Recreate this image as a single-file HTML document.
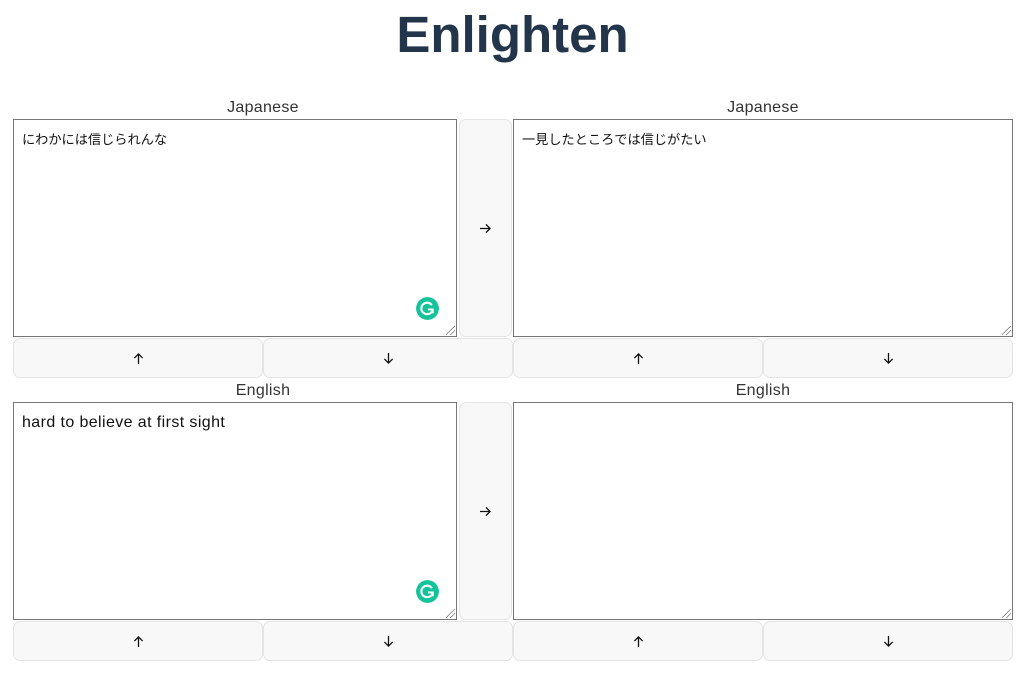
<!DOCTYPE html>
<html><head><meta charset="utf-8"><style>
*{box-sizing:border-box;margin:0;padding:0}
body{width:1033px;height:675px;background:#fff;position:relative;font-family:"Liberation Sans","Noto Sans CJK JP",sans-serif;overflow:hidden}
h1{position:absolute;left:0;width:1025px;top:3px;text-align:center;font-size:51px;font-weight:bold;color:#22354a;line-height:64px}
.lbl{position:absolute;width:500px;text-align:center;font-size:16px;color:#333;line-height:18px;letter-spacing:0.3px}
.ta{position:absolute;border:1px solid #767676;background:#fff;font-size:15px;color:#111;padding:10px 8px;line-height:20px}
.jp{font-size:13.2px}
.en{font-size:16px;letter-spacing:0.4px}
.ta .rs{position:absolute;right:1px;bottom:1px;width:9px;height:9px;background:linear-gradient(135deg,transparent 45%,#777 45%,#777 52%,transparent 52%,transparent 70%,#777 70%,#777 77%,transparent 77%)}
.btn{position:absolute;background:#f8f8f8;border:1px solid #e4e4e4;border-radius:7px;display:flex;align-items:center;justify-content:center}
.g{position:absolute;width:23px;height:23px;border-radius:50%}
</style></head><body>
<h1>Enlighten</h1>
<svg width="0" height="0" style="position:absolute"><defs>
<symbol id="up" viewBox="0 0 12 14"><path d="M6 13V2M1.5 6.5L6 2l4.5 4.5" fill="none" stroke="#111" stroke-width="1.4"/></symbol>
<symbol id="dn" viewBox="0 0 12 14"><path d="M6 1v11M1.5 7.5L6 12l4.5-4.5" fill="none" stroke="#111" stroke-width="1.4"/></symbol>
<symbol id="rt" viewBox="0 0 14 12"><path d="M1 6h11M7.5 1.5L12 6l-4.5 4.5" fill="none" stroke="#111" stroke-width="1.4"/></symbol>
</defs></svg>

<div class="lbl" style="left:13px;top:99px">Japanese</div>
<div class="lbl" style="left:513px;top:99px">Japanese</div>
<div class="ta jp" style="left:13px;top:119px;width:444px;height:218px">にわかには信じられんな<span class="rs"></span>
<svg class="g" style="left:402px;top:177px" viewBox="0 0 24 24"><circle cx="12" cy="12" r="12" fill="#15c39a"/><path d="M16.5 8.5A6 6 0 1 0 17 14.5" fill="none" stroke="#fff" stroke-width="2.2"/><path d="M12.5 13h5v4" fill="none" stroke="#fff" stroke-width="2"/></svg></div>
<div class="btn" style="left:459px;top:119px;width:53px;height:218px"><svg width="13" height="11"><use href="#rt"/></svg></div>
<div class="ta jp" style="left:513px;top:119px;width:500px;height:218px">一見したところでは信じがたい<span class="rs"></span></div>
<div class="btn" style="left:13px;top:338px;width:250px;height:40px"><svg width="11" height="13"><use href="#up"/></svg></div>
<div class="btn" style="left:263px;top:338px;width:250px;height:40px"><svg width="11" height="13"><use href="#dn"/></svg></div>
<div class="btn" style="left:513px;top:338px;width:250px;height:40px"><svg width="11" height="13"><use href="#up"/></svg></div>
<div class="btn" style="left:763px;top:338px;width:250px;height:40px"><svg width="11" height="13"><use href="#dn"/></svg></div>

<div class="lbl" style="left:13px;top:382px">English</div>
<div class="lbl" style="left:513px;top:382px">English</div>
<div class="ta en" style="left:13px;top:402px;width:444px;height:218px">hard to believe at first sight<span class="rs"></span>
<svg class="g" style="left:402px;top:177px" viewBox="0 0 24 24"><circle cx="12" cy="12" r="12" fill="#15c39a"/><path d="M16.5 8.5A6 6 0 1 0 17 14.5" fill="none" stroke="#fff" stroke-width="2.2"/><path d="M12.5 13h5v4" fill="none" stroke="#fff" stroke-width="2"/></svg></div>
<div class="btn" style="left:459px;top:402px;width:53px;height:218px"><svg width="13" height="11"><use href="#rt"/></svg></div>
<div class="ta" style="left:513px;top:402px;width:500px;height:218px"><span class="rs"></span></div>
<div class="btn" style="left:13px;top:621px;width:250px;height:40px"><svg width="11" height="13"><use href="#up"/></svg></div>
<div class="btn" style="left:263px;top:621px;width:250px;height:40px"><svg width="11" height="13"><use href="#dn"/></svg></div>
<div class="btn" style="left:513px;top:621px;width:250px;height:40px"><svg width="11" height="13"><use href="#up"/></svg></div>
<div class="btn" style="left:763px;top:621px;width:250px;height:40px"><svg width="11" height="13"><use href="#dn"/></svg></div>
</body></html>
